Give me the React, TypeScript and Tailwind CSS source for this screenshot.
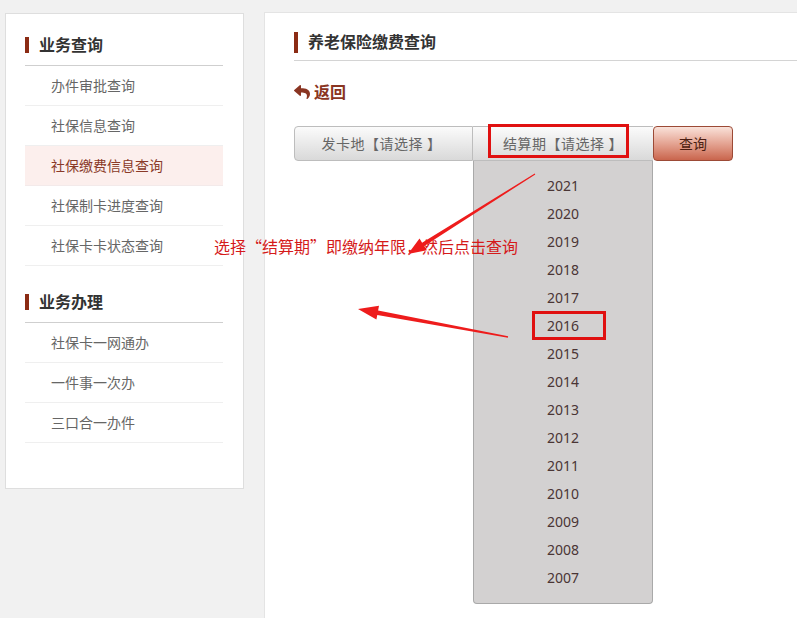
import React from "react";
import { FaReply } from "react-icons/fa";

const queryItems = [
  "办件审批查询",
  "社保信息查询",
  "社保缴费信息查询",
  "社保制卡进度查询",
  "社保卡卡状态查询",
];
const handleItems = ["社保卡一网通办", "一件事一次办", "三口合一办件"];
const years = [
  "2021", "2020", "2019", "2018", "2017", "2016", "2015", "2014",
  "2013", "2012", "2011", "2010", "2009", "2008", "2007",
];

export default function App() {
  return (
    <div
      className="relative w-[797px] h-[618px] overflow-hidden bg-[#f1f1f1] flex gap-[20px] pl-[5px] pt-[12px]"
      style={{ fontFamily: "'Noto Sans', 'Noto Sans CJK SC', sans-serif" }}
    >
      <SideMenu />
      <MainPanel />
      <Annotation />
    </div>
  );
}

const SideMenu = () => {
  return (
    <div className="mt-[1px] w-[239px] h-[476px] bg-white border border-[#dedede] pl-[19px] pr-[20px] pt-[11px]">
      <MenuTitle text="业务查询" />
      {queryItems.map((item) => (
        <MenuItem key={item} text={item} active={item === "社保缴费信息查询"} />
      ))}
      <div className="mt-[16px]">
        <MenuTitle text="业务办理" />
      </div>
      {handleItems.map((item) => (
        <MenuItem key={item} text={item} />
      ))}
    </div>
  );
};

const MenuTitle = ({ text }: { text: string }) => {
  return (
    <div className="h-[41px] flex items-center gap-[10px] border-b border-[#cfcfcf]">
      <span className="w-[4px] h-[16px] bg-[#8b2b14]" />
      <span className="text-[16px] font-bold text-[#333]">{text}</span>
    </div>
  );
};

const MenuItem = ({ text, active }: { text: string; active?: boolean }) => {
  return (
    <div
      className={
        active
          ? "h-[40px] flex items-center pl-[26px] text-[14px] border-b border-[#f3eaea] bg-[#fcefed] text-[#8a3a28]"
          : "h-[40px] flex items-center pl-[26px] text-[14px] border-b border-[#efefef] text-[#666]"
      }
    >
      {text}
    </div>
  );
};

const MainPanel = () => {
  return (
    <div className="flex-1 h-[620px] bg-white border-l border-t border-[#e4e4e4] pl-[29px]">
      <div className="pt-[17px] pb-[6px] flex items-center gap-[10px] border-b border-[#d4d4d4]">
        <span className="w-[4px] h-[21px] bg-[#8b2b14]" />
        <span className="text-[16px] font-bold text-[#333]">养老保险缴费查询</span>
      </div>
      <div className="mt-[19px] flex items-center gap-[4px] text-[#8a3522]">
        <FaReply className="w-[16px] h-[16px]" />
        <span className="text-[16px] font-bold">返回</span>
      </div>
      <div className="mt-[22px] flex">
        <button className="w-[179px] h-[35px] rounded-l-[4px] border border-[#bdbdbd] bg-gradient-to-b from-[#fbfbfb] to-[#d9d9d9] text-[14px] text-[#666] tracking-[0.5px] pr-[4px]">
          发卡地【请选择 】
        </button>
        <div className="relative">
          <button className="w-[180px] h-[35px] border-y border-[#bdbdbd] bg-gradient-to-b from-[#fbfbfb] to-[#d9d9d9] text-[14px] text-[#666] tracking-[0.5px]">
            结算期【请选择 】
          </button>
          <div className="absolute left-[15px] top-[-2px] w-[141px] h-[34px] border-[3px] border-[#e01010]" />
          <div className="absolute left-0 top-[35px] w-[180px] h-[443px] bg-[#d3d1d1] border-x border-b border-[#a9a9a9] rounded-b-[4px] pt-[10px] flex flex-col items-center">
            {years.map((y) => (
              <div
                key={y}
                className={
                  y === "2016"
                    ? "relative h-[28px] w-full flex items-center justify-center text-[14px] text-[#4a3535]"
                    : "h-[28px] w-full flex items-center justify-center text-[14px] text-[#4a3535]"
                }
              >
                {y}
                {y === "2016" && (
                  <span className="absolute left-[58px] top-0 w-[74px] h-[29px] border-[3px] border-[#e01010]" />
                )}
              </div>
            ))}
          </div>
        </div>
        <button className="w-[80px] h-[35px] rounded-[4px] border border-[#9c4a36] bg-gradient-to-b from-[#f9e2da] to-[#c9654d] text-[14px] text-[#4a1d10]">
          查询
        </button>
      </div>
    </div>
  );
};

const Annotation = () => {
  return (
    <>
      <div
        className="absolute left-[214px] top-[234px] text-[16px] text-[#d51a1a] whitespace-nowrap"
        style={{ fontFamily: "'Noto Sans CJK SC', sans-serif" }}
      >
        选择“结算期”即缴纳年限，然后点击查询
      </div>
      <svg className="absolute left-0 top-0" width="797" height="618" viewBox="0 0 797 618">
        <polygon
          fill="#ee1c1c"
          points="534.7,173.6 422.1,242.7 419.5,238.5 408,254 426.9,250.3 424.3,246.1 535.3,174.4"
        />
        <polygon
          fill="#ee1c1c"
          points="508.1,336.2 378.1,310.5 379,305.8 358,309 376.4,319.6 377.3,314.9 507.9,337.8"
        />
      </svg>
    </>
  );
};
